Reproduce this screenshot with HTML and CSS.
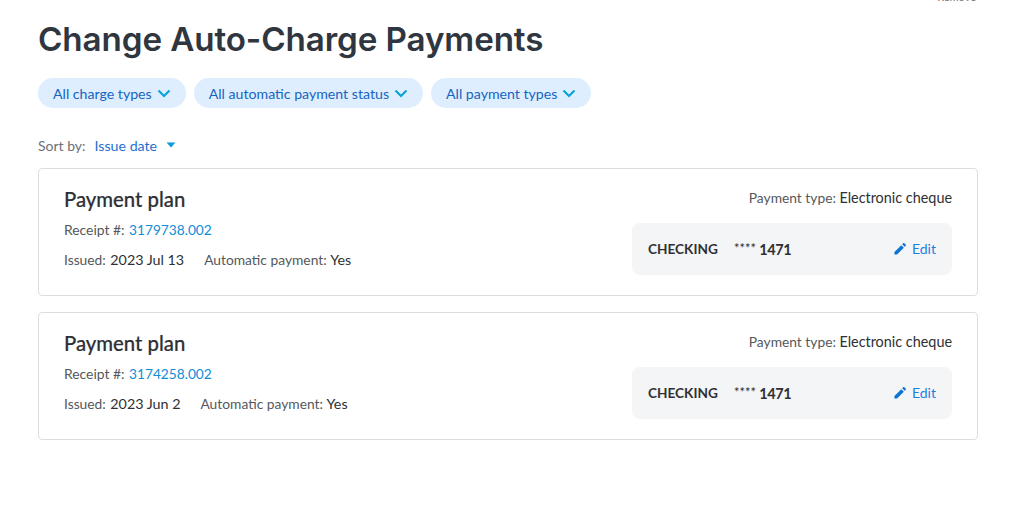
FILE: index.html
```html
<!DOCTYPE html>
<html lang="en">
<head>
<meta charset="utf-8">
<title>Change Auto-Charge Payments</title>
<link rel="stylesheet" href="styles.css">
</head>
<body>
<div class="page">
  <div class="clipped"><span>Remove</span></div>
  <h1 class="title">Change Auto-Charge Payments</h1>
  <div class="filters">
    <button class="pill">All charge types <svg class="chev" viewBox="0 0 14 9"><path d="M1.500 1.500 7 7l5.500-5.500" /></svg></button>
    <button class="pill">All automatic payment status <svg class="chev" viewBox="0 0 14 9"><path d="M1.500 1.500 7 7l5.500-5.500" /></svg></button>
    <button class="pill">All payment types <svg class="chev" viewBox="0 0 14 9"><path d="M1.500 1.500 7 7l5.500-5.500" /></svg></button>
  </div>
  <div class="sort">
    <span class="sort-label">Sort by:</span>
    <span class="sort-value">Issue date</span>
    <svg class="caret" viewBox="0 0 10 6"><path d="M0.500 0.500h9L5 5.500z" /></svg>
  </div>
  <section class="card">
    <div class="card-left">
      <h2 class="card-title">Payment plan</h2>
      <div class="receipt">Receipt #: <a class="link">3179738.002</a></div>
      <div class="meta">
        <span>Issued: <b class="date">2023 Jul 13</b></span>
        <span>Automatic payment: <b>Yes</b></span>
      </div>
    </div>
    <div class="card-right">
      <div class="ptype">Payment type: <b>Electronic cheque</b></div>
      <div class="account">
        <span class="acct-type">CHECKING</span>
        <span class="acct-num"><span class="stars">****</span> 1471</span>
        <a class="edit"><svg class="pencil" viewBox="0 0 14 14"><path d="M0.500 10.500 8.500 2.500l3 3-8 8H0.500zM9.500 1.500 10.700 0.300a1 1 0 0 1 1.400 0l1.600 1.600a1 1 0 0 1 0 1.400L12.500 4.500z" /></svg><span class="edit-label">Edit</span></a>
      </div>
    </div>
  </section>
  <section class="card">
    <div class="card-left">
      <h2 class="card-title">Payment plan</h2>
      <div class="receipt">Receipt #: <a class="link">3174258.002</a></div>
      <div class="meta">
        <span>Issued: <b class="date">2023 Jun 2</b></span>
        <span>Automatic payment: <b>Yes</b></span>
      </div>
    </div>
    <div class="card-right">
      <div class="ptype">Payment type: <b>Electronic cheque</b></div>
      <div class="account">
        <span class="acct-type">CHECKING</span>
        <span class="acct-num"><span class="stars">****</span> 1471</span>
        <a class="edit"><svg class="pencil" viewBox="0 0 14 14"><path d="M0.500 10.500 8.500 2.500l3 3-8 8H0.500zM9.500 1.500 10.700 0.300a1 1 0 0 1 1.400 0l1.600 1.600a1 1 0 0 1 0 1.400L12.500 4.500z" /></svg><span class="edit-label">Edit</span></a>
      </div>
    </div>
  </section>
</div>
</body>
</html>
```
FILE: styles.css
```css
* { box-sizing: border-box; }
html, body { margin: 0; background: #fff; }
body { font-family: "Lato", "Liberation Sans", sans-serif; color: #2e3238; overflow: hidden; }
.page { width: 1030px; height: 531px; padding: 0 52px 0 38px; }
.clipped { height: 3px; overflow: hidden; display: flex; justify-content: flex-end; align-items: flex-end; color: #777; font-size: 11px; line-height: 12px; padding-right: 2px; }
.title { margin: 14px 0 0; font-family: "Inter", "Lato", sans-serif; font-size: 33.200px; line-height: 44px; font-weight: 600; color: #2f3640; letter-spacing: -0.1px; }
.filters { display: flex; gap: 8px; margin-top: 17px; }
.pill { display: flex; align-items: center; gap: 5px; height: 30px; padding: 0 15px; border: 0; border-radius: 15px; background: #deeeff; color: #1565c0; font: inherit; font-size: 14.150px; }
.chev { width: 14px; height: 9px; fill: none; stroke: #0ba3dc; stroke-width: 2.200; }
.sort { display: flex; align-items: center; margin-top: 26px; height: 22px; font-size: 14px; }
.sort-label { color: #6c7075; margin-right: 9px; }
.sort-value { color: #1f6fd0; margin-right: 9px; font-size: 14.200px; }
.caret { width: 10px; height: 6px; fill: #0e9bdc; }
.card { display: flex; justify-content: space-between; height: 128px; margin-top: 12px; padding: 18px 25px 0; border: 1px solid #dcdcdc; border-radius: 4px; }
.card + .card { margin-top: 16px; }
.card-title { margin: 0; font-size: 20.300px; line-height: 25px; font-weight: 500; color: #2e3033; -webkit-text-stroke: 0.2px #2e3033; }
.receipt { margin-top: 8px; font-size: 13.900px; line-height: 20px; color: #54585c; }
.link { color: #0e8ed8; font-size: 13.700px; margin-left: 1px; }
.meta { display: flex; gap: 20px; margin-top: 10px; font-size: 13.800px; line-height: 20px; color: #54585c; }
b { font-weight: 400; color: #2e3033; font-size: 14.300px; }
.date { margin-left: 1px; }
.card-right { display: flex; flex-direction: column; align-items: flex-end; width: 320px; padding-top: 1px; }
.ptype { font-size: 13.800px; line-height: 20px; color: #54585c; }
.ptype b { font-size: 14.400px; }
.account { display: flex; align-items: center; width: 320px; height: 52px; margin-top: 15px; padding: 0 16px; border-radius: 8px; background: #f4f5f7; }
.acct-type { font-size: 13.600px; font-weight: 700; color: #2e3033; width: 86px; }
.acct-num { font-size: 14.500px; font-weight: 700; color: #2e3033; letter-spacing: -0.400px; }
.stars { font-size: 13px; font-weight: 400; vertical-align: 2px; letter-spacing: 0; }
.edit { display: flex; align-items: center; gap: 6px; margin-left: auto; color: #1d7fe0; font-size: 14px; }
.edit-label { position: relative; top: -1px; }
.pencil { width: 12px; height: 12px; fill: #0f73d6; }
```
